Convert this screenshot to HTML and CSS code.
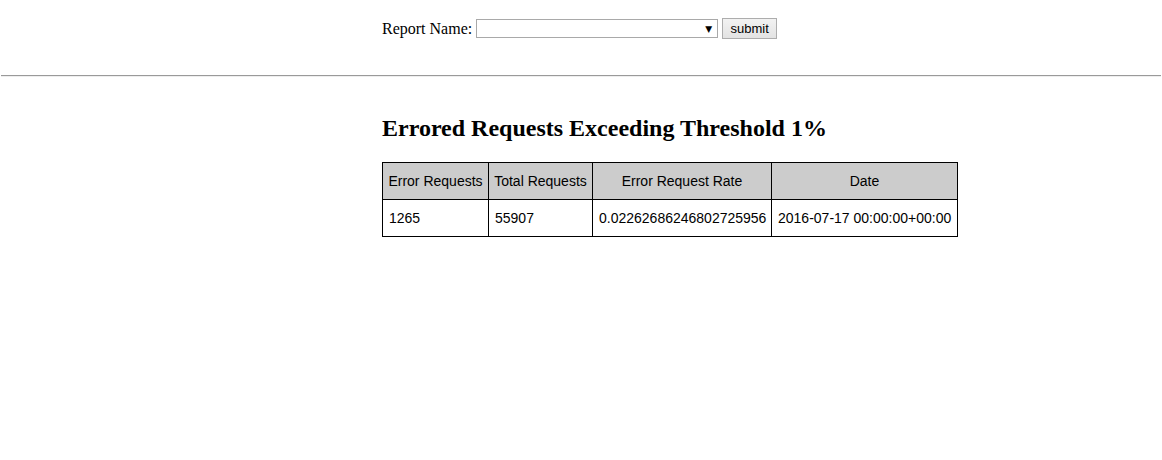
FILE: index.html
```html
<!DOCTYPE html>
<html>
<head>
<meta charset="utf-8">
<link rel="stylesheet" href="styles.css">
</head>
<body>
<div class="top">
  <form class="report-form">
    <label class="label">Report Name:</label>
    <span class="select"><span class="arrow">&#9660;</span></span>
    <button type="button" class="submit">submit</button>
  </form>
</div>
<hr class="rule">
<div class="content">
  <h2 class="title">Errored Requests Exceeding Threshold 1%</h2>
  <table class="report">
    <colgroup>
      <col class="c1"><col class="c2"><col class="c3"><col class="c4">
    </colgroup>
    <thead>
      <tr>
        <th>Error Requests</th>
        <th>Total Requests</th>
        <th>Error Request Rate</th>
        <th>Date</th>
      </tr>
    </thead>
    <tbody>
      <tr>
        <td>1265</td>
        <td>55907</td>
        <td>0.02262686246802725956</td>
        <td>2016-07-17 00:00:00+00:00</td>
      </tr>
    </tbody>
  </table>
</div>
</body>
</html>
```
FILE: styles.css
```css
html, body {
  margin: 0;
  padding: 0;
  background: #fff;
  color: #000;
  font-family: "Liberation Serif", "Times New Roman", serif;
}
.top {
  padding: 18px 0 0 382px;
  height: 75px;
  box-sizing: border-box;
}
.report-form {
  display: flex;
  align-items: center;
  font-size: 16px;
}
.label {
  margin-right: 4px;
}
.select {
  display: flex;
  justify-content: flex-end;
  align-items: center;
  width: 242px;
  height: 19px;
  box-sizing: border-box;
  border: 1px solid #a9a9a9;
  background: #fff;
  padding-right: 5px;
  font-size: 9px;
  font-family: "DejaVu Sans", sans-serif;
}
.submit {
  margin-left: 4px;
  width: 55px;
  height: 21px;
  padding: 0;
  font-family: "Liberation Sans", Arial, sans-serif;
  font-size: 13px;
  color: #000;
  background: linear-gradient(#f2f2f2, #e3e3e3);
  border: 1px solid #adadad;
  border-radius: 0;
}
.rule {
  margin: 0 1px;
  border: 0;
  border-top: 1px solid #9a9a9a;
  border-bottom: 1px solid #eeeeee;
  height: 0;
}
.content {
  padding-left: 382px;
  padding-top: 28px;
}
.title {
  margin: 0 0 11px 0;
  font-size: 24px;
  font-weight: bold;
  line-height: 46px;
}
.report {
  border-collapse: collapse;
  table-layout: fixed;
  width: 575px;
  font-family: "Liberation Sans", Arial, sans-serif;
  font-size: 14px;
}
.c1 { width: 106px; }
.c2 { width: 104px; }
.c3 { width: 179px; }
.c4 { width: 186px; }
.report th, .report td {
  border: 1px solid #000;
  padding: 0 0 0 6px;
  height: 37px;
  box-sizing: border-box;
  white-space: nowrap;
  overflow: hidden;
}
.report th {
  background: #cccccc;
  font-weight: normal;
  text-align: center;
  padding: 0 3px;
}
.report td {
  text-align: left;
}
```
